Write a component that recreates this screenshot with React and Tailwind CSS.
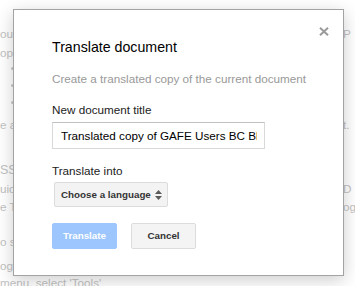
import React from "react";

const font = { fontFamily: '"Liberation Sans", Arial, sans-serif' };

function Row({ className = "", left, right }) {
  return (
    <div className={`grid grid-cols-[343px_12px] h-[14px] ${className}`}>
      <div className="whitespace-nowrap overflow-hidden">{left}</div>
      <div className="whitespace-nowrap overflow-hidden">{right}</div>
    </div>
  );
}

function Dot({ className = "" }) {
  return (
    <div className={`grid grid-cols-[343px_12px] h-[14px] items-center ${className}`}>
      <div className="flex">
        <span className="ml-[11px] w-[3px] h-[3px] rounded-full bg-[#c8c8c8]" />
      </div>
      <div />
    </div>
  );
}

export default function App() {
  return (
    <div
      className="relative w-[355px] h-[286px] overflow-hidden bg-white"
      style={font}
    >
      {/* page behind the overlay */}
      <div className="flex flex-col text-[11.7px] leading-[14px] text-[#c2c2c2]">
        <Row className="mt-[27px]" left="out the document" right="P" />
        <Row className="mt-[5px]" left="op the copy" />
        <Dot className="mt-[1px]" />
        <Dot className="mt-[3px]" />
        <Dot className="mt-[3px]" />
        <Row className="mt-[9px]" left="e a new copy" right="t." />
        <Row className="mt-[31px] text-[12.5px]" left="SS" />
        <Row className="mt-[5px]" left="uide" right="D" />
        <Row className="mt-[4px]" left="e Translate" right="og" />
        <Row className="mt-[21px]" left="o see" />
        <Row className="mt-[10px]" left="ogle Docs" />
        <Row className="mt-[3px]" left="menu, select 'Tools'" />
      </div>

      {/* dialog */}
      <div className="absolute left-[13px] top-[9px] w-[331px] h-[267px] bg-white border border-[#a3a3a3] shadow-[0_4px_16px_rgba(0,0,0,0.2)]">
        <svg
          className="absolute left-[305px] top-[17px]"
          width="10"
          height="9"
          viewBox="0 0 10 9"
        >
          <path
            d="M1 0.8 L9 8.2 M9 0.8 L1 8.2"
            stroke="#9a9a9a"
            strokeWidth="2"
            fill="none"
          />
        </svg>

        <div className="flex flex-col items-start pl-[38px] pt-[28px]">
          <div className="text-[14.2px] leading-[18px] text-black">
            Translate document
          </div>
          <div className="mt-[16px] text-[11.7px] leading-[14px] text-[#999]">
            Create a translated copy of the current document
          </div>
          <div className="mt-[17px] text-[11.7px] leading-[14px] text-[#222]">
            New document title
          </div>
          <div className="mt-[5px] w-[213px] h-[27px] border border-[#d9d9d9] border-t-[#c0c0c0] flex items-center pl-[8px]">
            <div className="w-[196px] overflow-hidden whitespace-nowrap text-[11.7px] leading-[14px] text-black">
              Translated copy of GAFE Users BC Blog
            </div>
          </div>
          <div className="mt-[15px] text-[11.7px] leading-[14px] text-[#222]">
            Translate into
          </div>
          <div className="mt-[4px] ml-[2px] w-[114px] h-[25px] border border-[#dcdcdc] rounded-[2px] bg-[#f3f3f3] flex items-center pl-[6px] pr-[5px] justify-between">
            <span className="text-[9.8px] font-bold text-[#333] leading-[12px]">
              Choose a language
            </span>
            <svg width="7" height="12" viewBox="0 0 7 12">
              <path d="M0 5 L3.5 1 L7 5 Z" fill="#5a5a5a" />
              <path d="M0 7 L3.5 11 L7 7 Z" fill="#5a5a5a" />
            </svg>
          </div>
          <div className="mt-[16px] flex gap-[14px]">
            <div className="w-[65px] h-[26px] rounded-[2px] bg-[#9cc6fd] border border-[#9cc6fd] flex items-center justify-center text-[9.8px] font-bold text-white">
              Translate
            </div>
            <div className="w-[65px] h-[26px] rounded-[2px] bg-[#f4f4f4] border border-[#dcdcdc] flex items-center justify-center text-[9.8px] font-bold text-[#333]">
              Cancel
            </div>
          </div>
        </div>
      </div>
    </div>
  );
}
